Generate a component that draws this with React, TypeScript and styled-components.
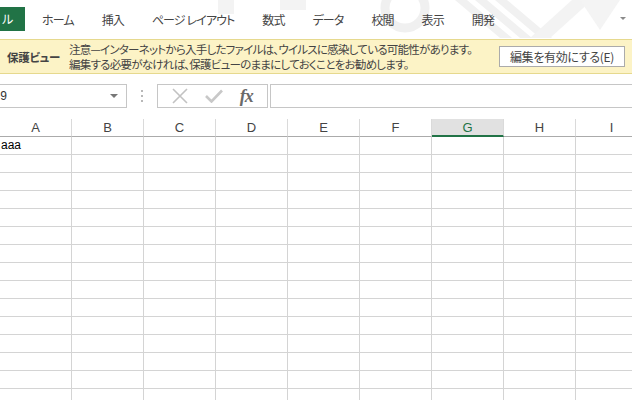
import React from "react"
import styled, { createGlobalStyle } from "styled-components"

const GlobalStyle = createGlobalStyle`
  html, body {
    margin: 0;
    padding: 0;
    background: #fff;
    overflow: hidden;
  }
  body {
    font-family: "Noto Sans CJK JP", "Liberation Sans", sans-serif;
    font-feature-settings: "palt";
    color: #444;
  }
`

const Page = styled.div`
  width: 632px;
  height: 400px;
  overflow: hidden;
  display: flex;
  flex-direction: column;

  & > * {
    flex-shrink: 0;
  }
`

const TabBar = styled.div`
  position: relative;
  display: flex;
  flex-direction: row;
  align-items: center;
  height: 39px;
  padding-bottom: 1px;
  box-sizing: border-box;
`

const Watermark = styled.svg`
  position: absolute;
  top: 0;
  left: 200px;
  z-index: 0;
`

const FileTab = styled.div`
  position: relative;
  z-index: 1;
  width: 25px;
  height: 24px;
  margin-top: -1px;
  background: #217346;
  color: #fff;
  font-size: 12px;
  line-height: 24px;
  padding-left: 2px;
  box-sizing: border-box;
  margin-right: 3px;
`

const Tab = styled.div`
  position: relative;
  z-index: 1;
  padding: 0 14px;
  font-size: 12px;
  letter-spacing: -0.9px;
  color: #444;
  white-space: nowrap;
`

const Collapse = styled.div`
  position: absolute;
  right: 6px;
  top: 17px;
  width: 0;
  height: 0;
  border-left: 3px solid transparent;
  border-right: 3px solid transparent;
  border-top: 3px solid #8a8a8a;
`

const MessageBar = styled.div`
  display: flex;
  flex-direction: row;
  align-items: center;
  height: 35px;
  background: #fcf3c6;
  border-top: 1px solid #e6d98e;
  border-bottom: 1px solid #e6d98e;
  box-sizing: border-box;
  padding: 0 7px;
`

const BarTitle = styled.div`
  font-size: 11.5px;
  font-weight: bold;
  color: #444;
  width: 62px;
  white-space: nowrap;
  letter-spacing: -0.3px;
`

const BarText = styled.div`
  flex: 1;
  font-size: 11.5px;
  line-height: 15px;
  color: #444;
  white-space: nowrap;
  letter-spacing: -0.75px;
`

const EnableButton = styled.button`
  height: 21px;
  width: 126px;
  background: #fff;
  border: 1px solid #ababab;
  font-family: inherit;
  font-feature-settings: "palt";
  font-size: 12px;
  letter-spacing: -0.3px;
  color: #444;
  padding: 0;
  margin-right: 0;
`

const FormulaRow = styled.div`
  display: flex;
  flex-direction: row;
  align-items: center;
  margin-top: 10px;
  height: 24px;
`

const NameBox = styled.div`
  display: flex;
  align-items: center;
  justify-content: space-between;
  margin-left: -14px;
  width: 141px;
  height: 24px;
  box-sizing: border-box;
  border: 1px solid #c6c6c6;
  padding: 0 8px 0 4px;
  font-family: "Liberation Sans", sans-serif;
  font-size: 12px;
  color: #333;
`

const DropArrow = styled.span`
  width: 0;
  height: 0;
  border-left: 4px solid transparent;
  border-right: 4px solid transparent;
  border-top: 4px solid #777;
`

const Grip = styled.div`
  width: 2px;
  height: 12px;
  margin: 0 14px;
  background: repeating-linear-gradient(to bottom, #b8b8b8 0 2px, transparent 2px 5px);
`

const FormulaButtons = styled.div`
  display: flex;
  align-items: center;
  justify-content: space-around;
  width: 111px;
  height: 24px;
  box-sizing: border-box;
  border: 1px solid #c6c6c6;
  padding: 0 6px;
`

const Fx = styled.span`
  font-family: "Liberation Serif", serif;
  font-style: italic;
  font-weight: bold;
  font-size: 18px;
  color: #6a6a6a;
  letter-spacing: -1px;
`

const FormulaInput = styled.div`
  flex: 1;
  height: 24px;
  margin-left: 2px;
  margin-right: -10px;
  box-sizing: border-box;
  border: 1px solid #c6c6c6;
`

const Sheet = styled.div`
  margin-top: 11px;
  display: grid;
  grid-template-columns: repeat(9, 72px);
  grid-auto-rows: 18px;
  font-family: "Liberation Sans", sans-serif;
`

const HeadCell = styled.div<{ $active?: boolean }>`
  display: flex;
  align-items: center;
  justify-content: center;
  box-sizing: border-box;
  font-size: 13px;
  color: ${(p) => (p.$active ? "#217346" : "#444")};
  background: ${(p) => (p.$active ? "#e1e1e1" : "#fff")};
  border-right: 1px solid #dadada;
  border-bottom: ${(p) => (p.$active ? "2px solid #217346" : "1px solid #ababab")};
  padding-top: ${(p) => (p.$active ? "1px" : "0")};
`

const Cell = styled.div`
  box-sizing: border-box;
  border-right: 1px solid #d4d4d4;
  border-bottom: 1px solid #d4d4d4;
  font-size: 12px;
  color: #000;
  line-height: 17px;
  padding-left: 1px;
  white-space: nowrap;
`

const tabs = ["ホーム", "挿入", "ページ レイアウト", "数式", "データ", "校閲", "表示", "開発"]
const columns = ["A", "B", "C", "D", "E", "F", "G", "H", "I"]
const rowCount = 15

function CrossIcon() {
  return (
    <svg width="16" height="16" viewBox="0 0 16 16">
      <path d="M1 1 L15 15 M15 1 L1 15" stroke="#c2c2c2" strokeWidth="1.6" fill="none" />
    </svg>
  )
}

function CheckIcon() {
  return (
    <svg width="18" height="14" viewBox="0 0 18 14">
      <path d="M1 7 L6.5 12.5 L17 1.5" stroke="#c8c8c8" strokeWidth="2.6" fill="none" />
    </svg>
  )
}

function App() {
  return (
    <Page>
      <GlobalStyle />
      <TabBar>
        <Watermark width="432" height="38" viewBox="0 0 432 38">
          <rect x="18" y="0" width="16" height="14" fill="#f3f3f3" />
          <rect x="80" y="0" width="26" height="10" fill="#f3f3f3" />
          <circle cx="205" cy="8" r="20" fill="none" stroke="#f0f0f0" strokeWidth="9" />
          <path d="M255 0 L300 38 L312 38 L267 0 Z" fill="#f1f1f1" />
          <path d="M275 0 L320 38 L332 38 L287 0 Z" fill="#f1f1f1" />
          <path d="M295 0 L340 38 L352 38 L307 0 Z" fill="#f1f1f1" />
          <path d="M330 38 L372 0 L392 0 L350 38 Z" fill="#f3f3f3" />
          <path d="M380 0 L420 0 L400 30 Z" fill="#f4f4f4" />
        </Watermark>
        <FileTab>ル</FileTab>
        {tabs.map((t) => (
          <Tab key={t}>{t}</Tab>
        ))}
        <Collapse />
      </TabBar>
      <MessageBar>
        <BarTitle>保護ビュー</BarTitle>
        <BarText>
          注意—インターネットから入手したファイルは、ウイルスに感染している可能性があります。
          <br />
          編集する必要がなければ、保護ビューのままにしておくことをお勧めします。
        </BarText>
        <EnableButton>編集を有効にする(E)</EnableButton>
      </MessageBar>
      <FormulaRow>
        <NameBox>
          <span>G9</span>
          <DropArrow />
        </NameBox>
        <Grip />
        <FormulaButtons>
          <CrossIcon />
          <CheckIcon />
          <Fx>fx</Fx>
        </FormulaButtons>
        <FormulaInput />
      </FormulaRow>
      <Sheet>
        {columns.map((c) => (
          <HeadCell key={c} $active={c === "G"}>
            {c}
          </HeadCell>
        ))}
        {Array.from({ length: rowCount }).map((_, r) =>
          columns.map((c) => (
            <Cell key={c + r}>{r === 0 && c === "A" ? "aaa" : ""}</Cell>
          ))
        )}
      </Sheet>
    </Page>
  )
}

export default App
